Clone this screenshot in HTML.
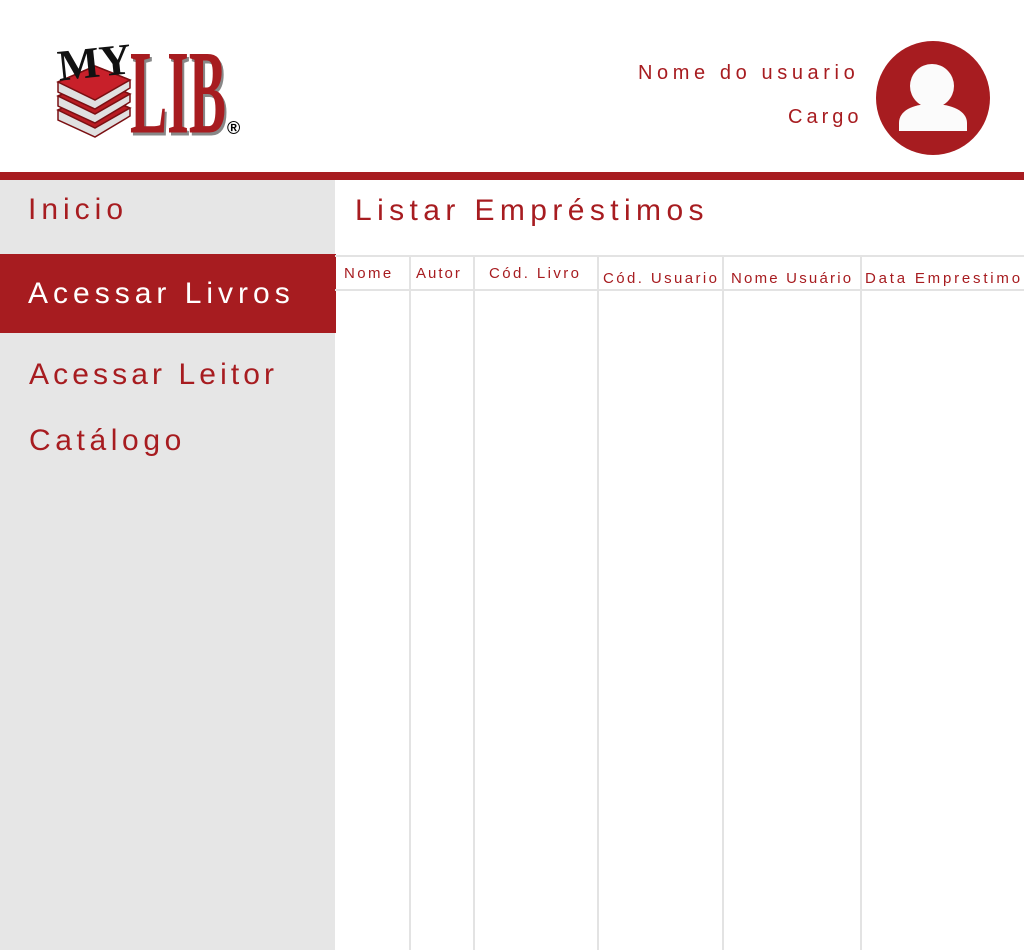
<!DOCTYPE html>
<html><head><meta charset="utf-8"><style>
body{margin:0;width:1024px;height:950px;position:relative;overflow:hidden;background:#fff;font-family:"Liberation Sans",sans-serif;color:#a71c20}
.a{position:absolute;white-space:nowrap}
.bar{position:absolute;left:0;top:172px;width:1024px;height:8px;background:#a71c20}
.side{position:absolute;left:0;top:180px;width:335px;height:770px;background:#e6e6e6}
.act{position:absolute;left:0;top:254px;width:336px;height:79px;background:#a71c20}
.nav{font-size:30px;letter-spacing:5px}
.vl{position:absolute;top:256px;width:2px;height:694px;background:#e3e3e3}
.hl{position:absolute;left:335px;width:689px;height:2px;background:#e3e3e3}
.th{font-size:15px;letter-spacing:2.4px}
</style></head><body>
<svg class="a" style="left:55px;top:38px" width="195" height="104" viewBox="0 0 195 104">
 <g stroke="#7a0f12" stroke-width="1.5">
  <path d="M3 72 L40 56 L75 70 L75 78 L40 99 L3 82Z" fill="#e0e0e0"/>
  <path d="M3 72 L40 56 L75 70 L40 90Z" fill="#b81c22"/>
  <path d="M3 58 L40 42 L75 56 L75 64 L40 85 L3 68Z" fill="#e0e0e0"/>
  <path d="M3 58 L40 42 L75 56 L40 76Z" fill="#b81c22"/>
  <path d="M3 44 L40 28 L75 42 L75 50 L40 71 L3 54Z" fill="#e0e0e0"/>
  <path d="M3 44 L40 28 L75 42 L40 62Z" fill="#c8202a"/>
 </g>
 <text x="3" y="40" font-family="Liberation Serif" font-weight="bold" font-size="44" fill="#111" transform="rotate(-6 30 30)" textLength="74" lengthAdjust="spacingAndGlyphs">MY</text>
 <g transform="translate(0,96) scale(1,1.3) translate(0,-96)">
 <text x="77" y="97" font-family="Liberation Serif" font-weight="bold" font-size="92" fill="#888" textLength="96" lengthAdjust="spacingAndGlyphs">LIB</text>
 <text x="75" y="95" font-family="Liberation Serif" font-weight="bold" font-size="92" fill="#a71c20" textLength="96" lengthAdjust="spacingAndGlyphs">LIB</text>
 </g>
 <text x="172" y="96" font-size="18" font-weight="bold" fill="#000">®</text>
</svg>
<div class="a" style="left:638px;top:62px;font-size:20px;letter-spacing:4.6px">Nome do usuario</div>
<div class="a" style="left:788px;top:106px;font-size:20px;letter-spacing:4px">Cargo</div>
<svg class="a" style="left:876px;top:41px" width="114" height="114" viewBox="0 0 114 114">
 <circle cx="57" cy="57" r="57" fill="#a71c20"/>
 <circle cx="56" cy="45" r="22" fill="#fbfbfb"/>
 <path d="M23 90 L23 82 C23 70 36 63 56 63 C76 63 91 70 91 82 L91 90Z" fill="#fbfbfb"/>
</svg>
<div class="bar"></div>
<div class="side"></div>
<div class="act"></div>
<div class="a nav" style="left:28px;top:193px">Inicio</div>
<div class="a nav" style="left:28px;top:277px;color:#fff">Acessar Livros</div>
<div class="a nav" style="left:29px;top:358px;letter-spacing:4.1px">Acessar Leitor</div>
<div class="a nav" style="left:29px;top:424px;letter-spacing:4.6px">Catálogo</div>
<div class="a" style="left:355px;top:194px;font-size:30px;letter-spacing:5.4px">Listar Empréstimos</div>
<div class="hl" style="top:255px"></div>
<div class="hl" style="top:289px"></div>
<div class="vl" style="left:409px"></div>
<div class="vl" style="left:473px"></div>
<div class="vl" style="left:597px"></div>
<div class="vl" style="left:722px"></div>
<div class="vl" style="left:860px"></div>
<div class="a th" style="left:344px;top:265px">Nome</div>
<div class="a th" style="left:416px;top:265px;letter-spacing:2px">Autor</div>
<div class="a th" style="left:489px;top:265px">Cód. Livro</div>
<div class="a th" style="left:603px;top:270px">Cód. Usuario</div>
<div class="a th" style="left:731px;top:270px;letter-spacing:2.2px">Nome Usuário</div>
<div class="a th" style="left:865px;top:270px;letter-spacing:2.8px">Data Emprestimo</div>
</body></html>
